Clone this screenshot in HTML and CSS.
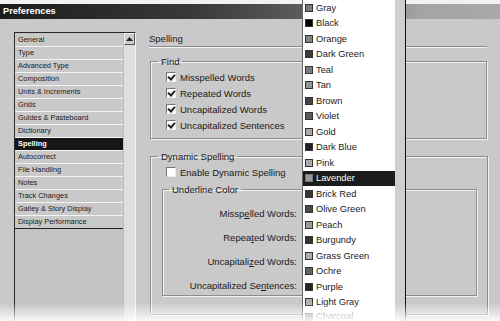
FILE: index.html
```html
<!DOCTYPE html>
<html>
<head>
<meta charset="utf-8">
<link rel="stylesheet" href="styles.css">
</head>
<body>
<div class="top-strip"></div>
<div class="titlebar">Preferences</div>
<div class="dialog">
  <div class="sidebar">
    <ul class="cats">
      <li>General</li>
      <li>Type</li>
      <li>Advanced Type</li>
      <li>Composition</li>
      <li>Units &amp; Increments</li>
      <li>Grids</li>
      <li>Guides &amp; Pasteboard</li>
      <li>Dictionary</li>
      <li class="sel">Spelling</li>
      <li>Autocorrect</li>
      <li>File Handling</li>
      <li>Notes</li>
      <li>Track Changes</li>
      <li>Galley &amp; Story Display</li>
      <li>Display Performance</li>
    </ul>
    <div class="scroll">
      <div class="scroll-btn"><svg width="7" height="4" viewBox="0 0 7 4"><path d="M0 4 L3.5 0 L7 4 Z" fill="#222"/></svg></div>
    </div>
  </div>
  <div class="panel">
    <div class="heading">Spelling</div>
    <fieldset class="group find">
      <legend>Find</legend>
      <div class="check"><span class="box on"></span>Misspelled Words</div>
      <div class="check"><span class="box on"></span>Repeated Words</div>
      <div class="check"><span class="box on"></span>Uncapitalized Words</div>
      <div class="check"><span class="box on"></span>Uncapitalized Sentences</div>
    </fieldset>
    <fieldset class="group dyn">
      <legend>Dynamic Spelling</legend>
      <div class="check"><span class="box"></span>Enable Dynamic Spelling</div>
      <fieldset class="group under">
        <legend>Underline Color</legend>
        <div class="lbl">Missp<u>e</u>lled Words:</div>
        <div class="lbl">Repea<u>t</u>ed Words:</div>
        <div class="lbl">Uncapitali<u>z</u>ed Words:</div>
        <div class="lbl">Uncapitalized Se<u>n</u>tences:</div>
      </fieldset>
    </fieldset>
  </div>
</div>
<div class="menu">
  <ul class="colors">
    <li><i style="background:#7a7a7a"></i>Gray</li>
    <li><i style="background:#000"></i>Black</li>
    <li><i style="background:#858585"></i>Orange</li>
    <li><i style="background:#3a3a3a"></i>Dark Green</li>
    <li><i style="background:#7d7d7d"></i>Teal</li>
    <li><i style="background:#959595"></i>Tan</li>
    <li><i style="background:#454545"></i>Brown</li>
    <li><i style="background:#5a5a5a"></i>Violet</li>
    <li><i style="background:#aaa"></i>Gold</li>
    <li><i style="background:#222"></i>Dark Blue</li>
    <li><i style="background:#ababab"></i>Pink</li>
    <li class="hi"><i style="background:#999"></i>Lavender</li>
    <li><i style="background:#383838"></i>Brick Red</li>
    <li><i style="background:#4a4a4a"></i>Olive Green</li>
    <li><i style="background:#9a9a9a"></i>Peach</li>
    <li><i style="background:#353535"></i>Burgundy</li>
    <li><i style="background:#aeaeae"></i>Grass Green</li>
    <li><i style="background:#626262"></i>Ochre</li>
    <li><i style="background:#262626"></i>Purple</li>
    <li><i style="background:#b0b0b0"></i>Light Gray</li>
    <li class="last"><i style="background:#555"></i>Charcoal</li>
  </ul>
  <div class="menu-side"></div>
</div>
<div class="fade"></div>
</body>
</html>
```
FILE: styles.css
```css
* { box-sizing: border-box; }
html, body { margin: 0; padding: 0; }
body {
  width: 500px;
  height: 321px;
  overflow: hidden;
  position: relative;
  background: #c9c9c9;
  font-family: "Liberation Sans", Arial, sans-serif;
  font-size: 9px;
  color: #1a1a1a;
}
.top-strip { height: 4px; background: #f2f2f2; }
.titlebar {
  height: 15px;
  line-height: 15px;
  padding-left: 3px;
  font-weight: bold;
  font-size: 9.2px;
  color: #fff;
  background: linear-gradient(to right, #1c1c1c 0, #3a3a3a 200px, #5c5c5c 300px, #a4a4a4 420px, #a8a8a8 500px);
}
.dialog {
  display: flex;
  padding: 13px 0 0 14px;
  height: 302px;
}
.sidebar {
  width: 122px;
  display: flex;
  border-left: 1px solid #2a2a2a;
  border-top: 1px solid #2a2a2a;
  border-right: 1px solid #f4f4f4;
  height: 300px;
}
.cats {
  list-style: none;
  margin: 0;
  padding: 1px 0 0 0;
  flex: 1;
  background: #c3c3c3;
}
.cats li {
  height: 13px;
  line-height: 12px;
  padding-left: 3px;
  font-size: 7.4px;
  background: #c9c9c9;
  border-bottom: 1px solid #f4f4f4;
  color: #1a1a1a;
}
.cats li:last-child { border-bottom: 1px solid #222; }
.cats li.sel {
  background: #161616;
  color: #fff;
  font-weight: bold;
}
.scroll {
  width: 12px;
  background: #dedede;
  border-left: 1px solid #bcbcbc;
}
.scroll-btn {
  height: 12px;
  background: #cdcdcd;
  border-top: 1px solid #f4f4f4;
  border-left: 1px solid #f4f4f4;
  border-right: 1px solid #555;
  border-bottom: 1px solid #555;
  display: flex;
  align-items: center;
  justify-content: center;
}
.panel {
  margin-left: 13px;
  width: 338px;
  display: flex;
  flex-direction: column;
}
.heading {
  height: 15px;
  line-height: 13px;
  font-size: 9.5px;
  border-bottom: 1px solid #8c8c8c;
  box-shadow: 0 1px 0 #f4f4f4;
}
.group {
  margin: 0;
  padding: 0;
  border: 1px solid #8c8c8c;
  box-shadow: inset 1px 1px 0 #f4f4f4, 1px 1px 0 #f4f4f4;
}
.group legend {
  margin-left: -8px;
  padding: 0 3px;
  font-size: 9.5px;
  line-height: 11px;
}
.find {
  margin: 9px 0 0 1px;
  height: 83px;
  padding: 2px 0 0 15px;
}
.check {
  height: 16px;
  display: flex;
  align-items: center;
  font-size: 9.5px;
}
.box {
  width: 10px;
  height: 10px;
  margin-right: 4px;
  background: #fff;
  border-top: 1px solid #777;
  border-left: 1px solid #777;
  border-right: 1px solid #eee;
  border-bottom: 1px solid #eee;
  position: relative;
}
.box.on::after {
  content: "";
  position: absolute;
  left: 2px;
  top: 0px;
  width: 3px;
  height: 5px;
  border-right: 2px solid #222;
  border-bottom: 2px solid #222;
  transform: rotate(40deg);
}
.dyn {
  margin: 12px 0 0 1px;
  height: 164px;
  padding: 2px 10px 0 15px;
}
.under {
  margin: 4px 0 0 -4px;
  width: 315px;
  height: 112px;
  padding: 13px 0 0 0;
}
.under legend { margin-left: 6px; }
.lbl {
  width: 134px;
  text-align: right;
  height: 24px;
  line-height: 12px;
  font-size: 9.5px;
}
.menu {
  position: absolute;
  left: 302px;
  top: 0;
  width: 104px;
  height: 330px;
  display: flex;
  border-left: 1px solid #666;
  border-right: 1px solid #111;
  background: #fff;
}
.colors {
  list-style: none;
  margin: 0;
  padding: 0;
  flex: 1;
}
.colors li {
  height: 15.5px;
  display: flex;
  align-items: center;
  padding-left: 2px;
  font-size: 9.3px;
  color: #1a1a1a;
}
.colors li.last { height: 11px; align-items: flex-end; opacity: 0.6; }
.colors li i {
  width: 8px;
  height: 8px;
  border: 1px solid #333;
  margin-right: 3px;
  flex-shrink: 0;
}
.colors li.hi { background: #1c1c1c; color: #fff; }
.colors li.hi i { border-color: #777; }
.menu-side {
  width: 10px;
  background: #cfcfcf;
}
.fade {
  position: absolute;
  left: 0;
  right: 0;
  bottom: 0;
  height: 18px;
  background: linear-gradient(to bottom, rgba(255,255,255,0), rgba(255,255,255,0.9));
}
```
